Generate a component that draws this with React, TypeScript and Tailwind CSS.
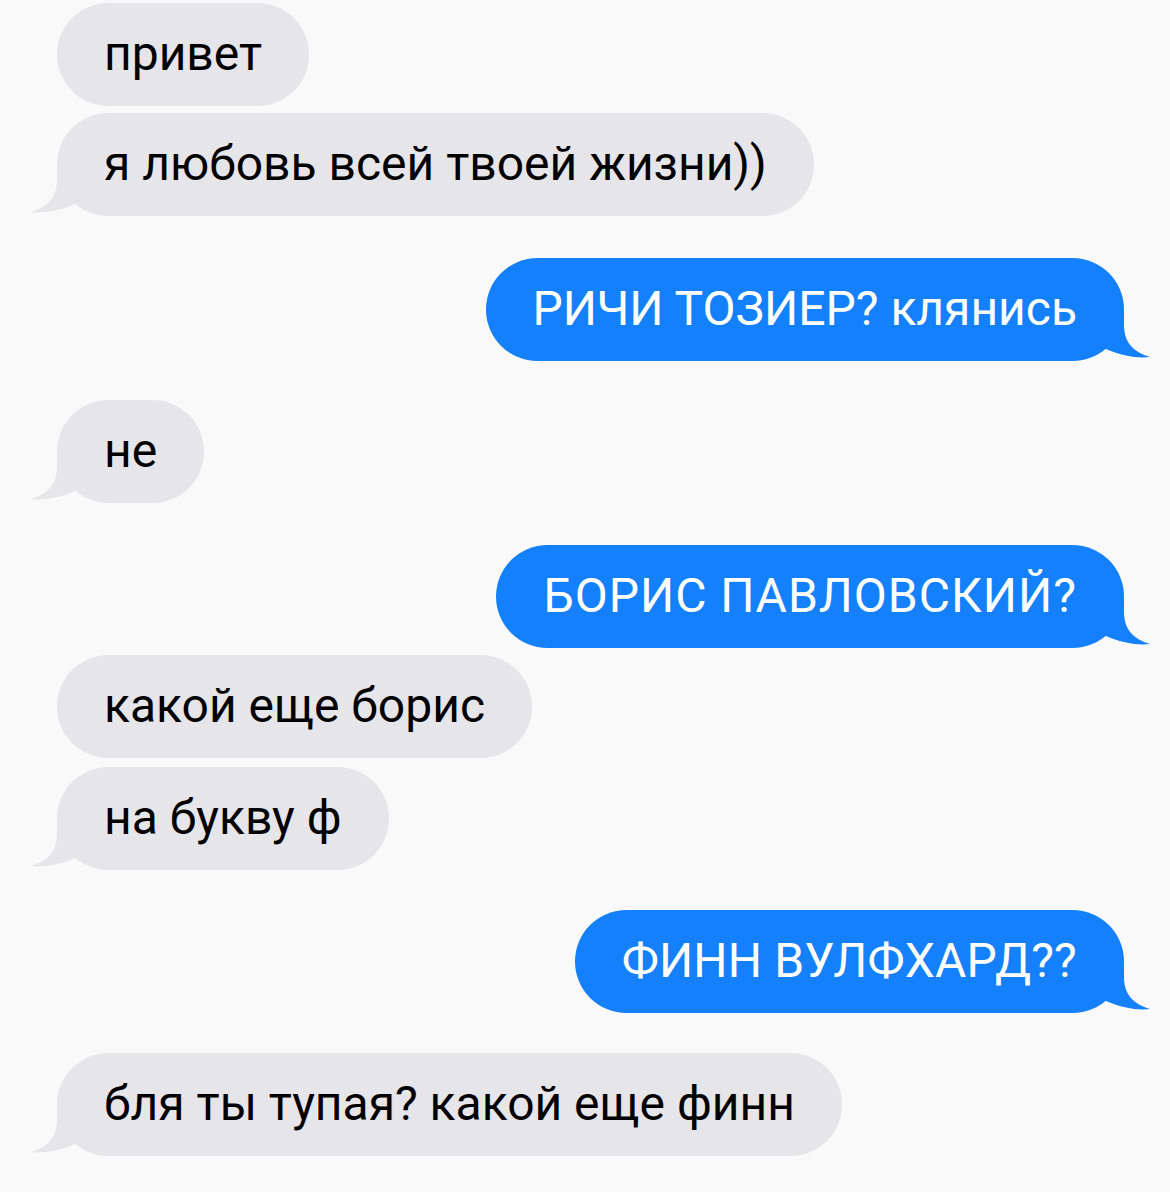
type Msg = { text: string; me: boolean; tail: boolean; mt: string; track?: string };

const MESSAGES: Msg[] = [
  { text: "привет", me: false, tail: false, mt: "mt-[3px]" },
  { text: "я любовь всей твоей жизни))", me: false, tail: true, mt: "mt-[7px]" },
  { text: "РИЧИ ТОЗИЕР? клянись", me: true, tail: true, mt: "mt-[42px]" },
  { text: "не", me: false, tail: true, mt: "mt-[39px]" },
  { text: "БОРИС ПАВЛОВСКИЙ?", me: true, tail: true, mt: "mt-[42px]", track: "tracking-[1px]" },
  { text: "какой еще борис", me: false, tail: false, mt: "mt-[7px]" },
  { text: "на букву ф", me: false, tail: true, mt: "mt-[9px]" },
  { text: "ФИНН ВУЛФХАРД??", me: true, tail: true, mt: "mt-[40px]", track: "tracking-[0.2px]" },
  { text: "бля ты тупая? какой еще финн", me: false, tail: true, mt: "mt-[40px]" },
];

function Tail({ me }: { me: boolean }) {
  return (
    <svg
      viewBox="0 0 60 50"
      className={`pointer-events-none absolute bottom-0 h-[50px] w-[60px] ${
        me ? "-right-[28px] -scale-x-100 fill-[#1580fb]" : "-left-[28px] fill-[#e5e5ea]"
      }`}
    >
      <path d="M28 0 L28 14 C28 32 18 41 2 46 C14 47.5 30 45 46 38 L60 20 L60 0 Z" />
    </svg>
  );
}

function Bubble({ m }: { m: Msg }) {
  return (
    <div className={`flex ${m.me ? "justify-end" : "justify-start"} ${m.mt}`}>
      <div
        className={`relative flex h-[103px] items-center rounded-full px-[47px] text-[48px] leading-none ${
          m.me ? "bg-[#1580fb] text-white" : "bg-[#e5e5ea] text-black"
        }`}
      >
        {m.tail && <Tail me={m.me} />}
        <span className={`relative whitespace-nowrap pb-[2px] ${m.track ?? ""}`}>{m.text}</span>
      </div>
    </div>
  );
}

export default function App() {
  return (
    <div
      className="h-[1192px] w-[1170px] overflow-hidden bg-[#f9f9f9] pl-[57px] pr-[46px]"
      style={{ fontFamily: "Roboto, 'Liberation Sans', sans-serif" }}
    >
      {MESSAGES.map((m, i) => (
        <Bubble key={i} m={m} />
      ))}
    </div>
  );
}
